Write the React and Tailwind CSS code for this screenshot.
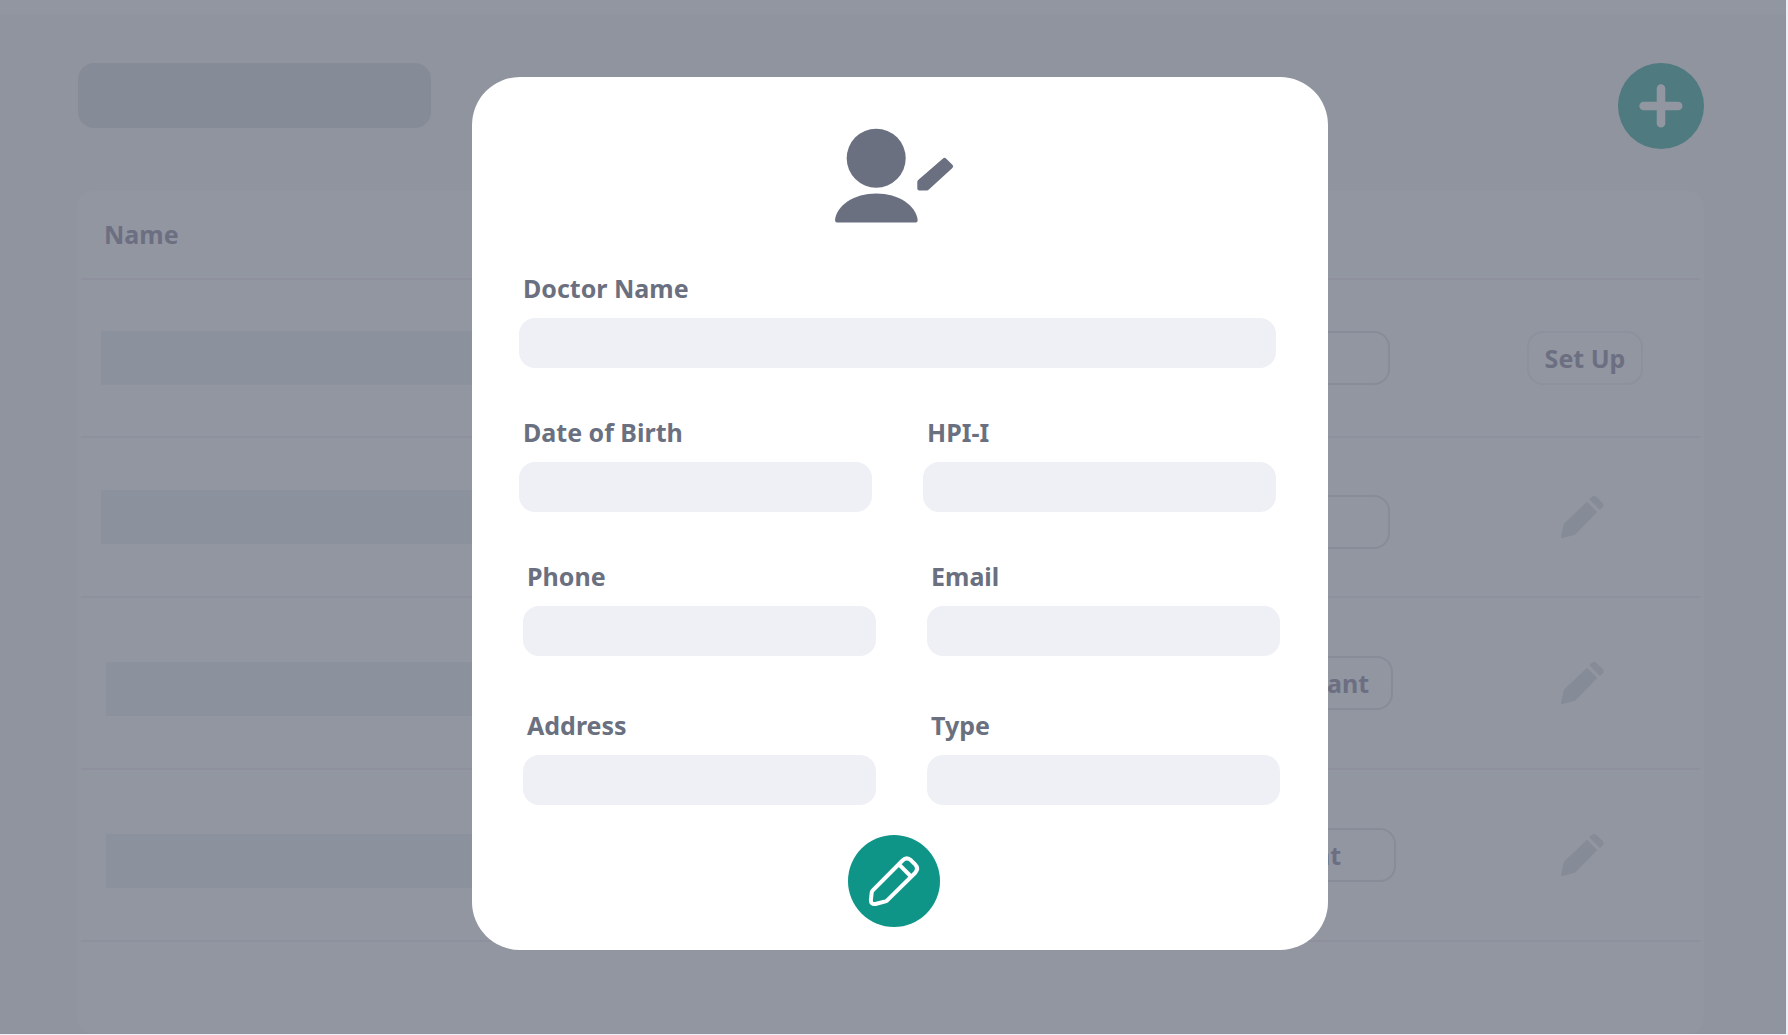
const rows = [
  {
    id: 1,
    height: "h-[158px]",
    nameCell: "pl-5",
    typeCell: "pr-[70px]",
    pill: "w-[200px]",
    type: "",
    action: "setup",
  },
  {
    id: 2,
    height: "h-[160px]",
    nameCell: "pl-5",
    typeCell: "pr-[70px] pt-2.5",
    pill: "w-[200px]",
    type: "",
    action: "edit",
  },
  {
    id: 3,
    height: "h-[172px]",
    nameCell: "pl-[25px] pt-3",
    typeCell: "pr-[67px]",
    pill: "pl-6 pr-[22px]",
    type: "Consultant",
    action: "edit",
  },
  {
    id: 4,
    height: "h-[172px]",
    nameCell: "pl-[25px] pt-3",
    typeCell: "pr-16",
    pill: "pl-6 pr-[53px]",
    type: "Resident",
    action: "edit",
  },
];

function PersonEditIcon() {
  return (
    <svg width="119" height="95" viewBox="0 0 119 95" fill="#6a7080" aria-hidden="true">
      <circle cx="41.2" cy="30.2" r="29.5" />
      <path d="M0 92C1.5 77.5 19 65.5 41.3 65.5S81 77.5 82.7 92Q82.8 94.4 81 94.4H1.7Q0 94.4 0 92Z" />
      <path d="M82.3 53.8Q82.3 52.7 83.2 51.9L108 30.5Q109.5 29.2 111 30.6L117.4 36.8Q119 38.4 117.4 40L93.6 61.8Q92.9 62.4 92 62.4H84.3Q82.3 62.4 82.3 60.4Z" />
    </svg>
  );
}

function PencilSolidIcon() {
  return (
    <svg width="43" height="43" viewBox="0 0 43 43" fill="#868c97" aria-hidden="true">
      <path d="M26 5.7L36.3 16L15 37.8Q14.3 38.5 13.2 38.9L1.5 42.1Q0 42.4 0.1 40.8L2.7 28.6Q2.9 27.6 3.6 26.9Z" />
      <path d="M28.2 3.3L30.6 1Q33 -0.9 35.4 1L41.5 6.8Q43.6 9 41.8 11.2L38.9 13.9Z" />
    </svg>
  );
}

function PencilOutlineIcon() {
  return (
    <svg
      width="92"
      height="92"
      viewBox="0 0 92 92"
      fill="none"
      stroke="#ffffff"
      strokeWidth="4"
      strokeLinejoin="round"
      aria-hidden="true"
    >
      <path d="M24.8 55.3L54.5 25.5Q58.7 21.2 63 25.3L66.9 29.2Q71.2 33.6 67 38L39.2 65.4Q38.4 66.1 37.4 66.4L27.5 69Q22.6 69.6 22.9 65L23.7 57.6Q23.9 56.2 24.8 55.3Z" />
      <path d="M51.2 29.6L62.5 41" />
    </svg>
  );
}

function PlusIcon() {
  return (
    <svg
      width="44"
      height="44"
      viewBox="0 0 44 44"
      stroke="#9296a1"
      strokeWidth="8.6"
      strokeLinecap="round"
      aria-hidden="true"
    >
      <path d="M22 4.6V39.2M4.6 22H39.2" />
    </svg>
  );
}

function Field({ id, label }) {
  return (
    <div className="flex flex-col gap-3.5">
      <label htmlFor={id} className="pl-1 text-[25px] leading-8 font-bold text-[#6a7080]">
        {label}
      </label>
      <input
        id={id}
        type="text"
        className="h-[50px] w-full rounded-2xl bg-[#eff0f6] px-4 text-xl text-[#6a7080] outline-none"
      />
    </div>
  );
}

function DoctorsPage() {
  return (
    <div className="flex grow flex-col bg-[#90949f]">
      <div className="h-3.5 bg-[#9296a1]" />
      <div className="flex items-start justify-between pt-[49px] pr-[82px] pl-[78px]">
        <input
          type="search"
          aria-label="Search"
          className="h-[65px] w-[353px] rounded-2xl bg-[#868c97] px-4 outline-none"
        />
        <button
          type="button"
          aria-label="Add doctor"
          className="flex size-[86px] items-center justify-center rounded-full bg-[#4e7a80]"
        >
          <PlusIcon />
        </button>
      </div>
      <div className="mt-[42px] mr-[82px] ml-[77px] grow rounded-2xl bg-[#9296a1] px-1">
        <table className="w-full table-fixed border-collapse text-[25px] leading-8 font-bold text-[#6c6f82]">
          <thead>
            <tr className="h-[88px] border-b-2 border-[#8e919d]">
              <th scope="col" className="pb-7 pl-[23px] text-left align-bottom">
                Name
              </th>
              <th scope="col" aria-label="Type" />
              <th scope="col" aria-label="Action" className="w-60" />
            </tr>
          </thead>
          <tbody>
            {rows.map((row) => (
              <tr key={row.id} className={`border-b-2 border-[#8e919d] ${row.height}`}>
                <td className={row.nameCell}>
                  <div className="h-[54px] w-full bg-[#8b919d]" />
                </td>
                <td className={row.typeCell}>
                  <div className="flex justify-end">
                    <span
                      className={`flex h-[54px] items-center rounded-2xl border-2 border-[#888c98] ${row.pill}`}
                    >
                      {row.type}
                    </span>
                  </div>
                </td>
                <td className="pl-1">
                  <div className="flex justify-center">
                    {row.action === "setup" ? (
                      <button
                        type="button"
                        className="ml-1.5 h-[54px] rounded-2xl border-2 border-[#8d919d] px-4"
                      >
                        Set Up
                      </button>
                    ) : (
                      <button type="button" aria-label="Edit doctor">
                        <PencilSolidIcon />
                      </button>
                    )}
                  </div>
                </td>
              </tr>
            ))}
          </tbody>
        </table>
      </div>
    </div>
  );
}

function EditDoctorDialog() {
  return (
    <form
      role="dialog"
      aria-label="Edit doctor"
      className="flex w-full max-w-[856px] flex-col rounded-[48px] bg-white pt-[51px] pb-[23px]"
    >
      <div className="flex justify-center pr-3">
        <PersonEditIcon />
      </div>
      <div className="mt-[49px] flex flex-col gap-12 pr-[52px] pl-[47px]">
        <Field id="doctor-name" label="Doctor Name" />
        <div className="grid grid-cols-2 gap-[51px]">
          <Field id="birth-date" label="Date of Birth" />
          <Field id="hpi-i" label="HPI-I" />
        </div>
      </div>
      <div className="mt-12 flex flex-col gap-[53px] pr-12 pl-[51px]">
        <div className="grid grid-cols-2 gap-[51px]">
          <Field id="phone" label="Phone" />
          <Field id="email" label="Email" />
        </div>
        <div className="grid grid-cols-2 gap-[51px]">
          <Field id="address" label="Address" />
          <Field id="type" label="Type" />
        </div>
      </div>
      <div className="mt-[30px] flex justify-center pr-3">
        <button
          type="button"
          aria-label="Save changes"
          className="size-[92px] rounded-full bg-[#0f9588]"
        >
          <PencilOutlineIcon />
        </button>
      </div>
    </form>
  );
}

export default function App() {
  return (
    <main className="relative flex min-h-screen flex-col bg-[#eff0f6] pr-0.5 pb-px font-['Noto_Sans',sans-serif]">
      <DoctorsPage />
      <div className="absolute inset-0 flex items-center justify-center pb-2 pl-3">
        <EditDoctorDialog />
      </div>
    </main>
  );
}
